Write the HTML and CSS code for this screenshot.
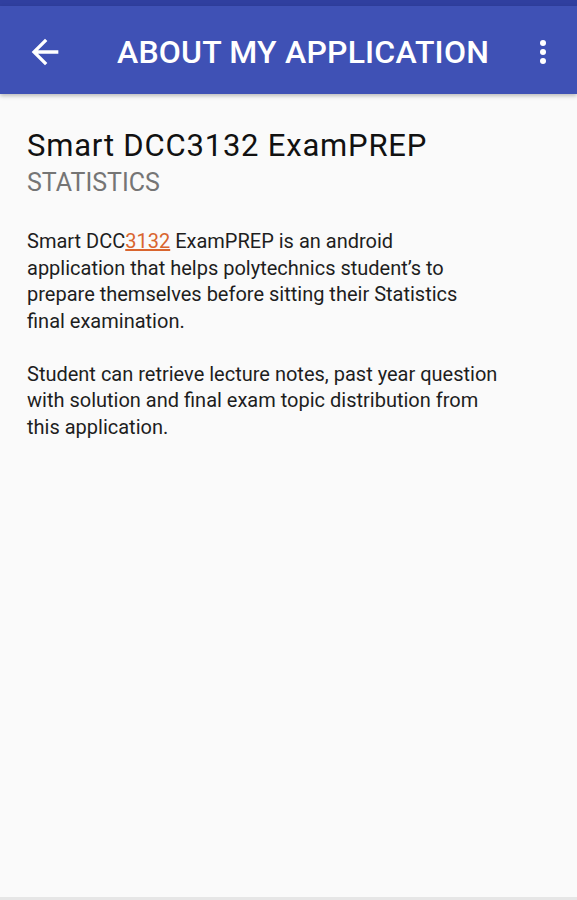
FILE: index.html
```html
<!DOCTYPE html>
<html>
<head>
    <title>About My Application</title>
    <meta name="viewport" content="width=device-width, initial-scale=1.0">
    <link rel="stylesheet" href="styles.css">
</head>
<body>
    <div class="status-bar"></div>
    <header class="toolbar">
        <button class="icon-btn back">
            <svg width="40" height="40" viewBox="0 0 24 24">
                <path d="M20 11H7.83l5.59-5.59L12 4l-8 8 8 8 1.41-1.41L7.83 13H20v-2z" fill="#fff"/>
            </svg>
        </button>
        <h1 class="toolbar-title">ABOUT MY APPLICATION</h1>
        <button class="icon-btn more">
            <svg width="36" height="36" viewBox="0 0 24 24">
                <circle cx="12" cy="6" r="2" fill="#fff"/>
                <circle cx="12" cy="12" r="2" fill="#fff"/>
                <circle cx="12" cy="18" r="2" fill="#fff"/>
            </svg>
        </button>
    </header>

    <main class="content">
        <h2 class="app-name">Smart DCC3132 ExamPREP</h2>
        <div class="subject">STATISTICS</div>

        <p class="desc">Smart DCC<a href="#">3132</a> ExamPREP is an android<br>application that helps polytechnics student’s to prepare themselves before sitting their Statistics final examination.</p>
        <p class="desc">Student can retrieve lecture notes, past year question with solution and final exam topic distribution from this application.</p>
    </main>
</body>
</html>
```

FILE: styles.css
```css
html, body {
    height: 100%;
}

body {
    margin: 0;
    background-color: #FAFAFA;
    font-family: Roboto, "Liberation Sans", sans-serif;
    display: flex;
    flex-direction: column;
    overflow: hidden;
}

.status-bar {
    height: 6px;
    background-color: #303F9F;
}

.toolbar {
    height: 88px;
    box-sizing: border-box;
    background-color: #3F51B5;
    display: flex;
    align-items: center;
    padding: 4px 16px 0 25px;
    box-shadow: 0 2px 4px rgba(0,0,0,0.25);
    position: relative;
    z-index: 1;
}

.icon-btn {
    background: none;
    border: none;
    padding: 0;
    display: flex;
    cursor: pointer;
}

.toolbar-title {
    flex: 1;
    margin: 0 0 0 52px;
    color: #fff;
    font-size: 32px;
    font-weight: 500;
    letter-spacing: 0.2px;
}

.content {
    flex: 1;
    padding: 34px 27px;
    border-bottom: 3px solid #E6E6E6;
}

.app-name {
    margin: 0 0 4px;
    font-size: 31px;
    font-weight: 400;
    letter-spacing: 0.8px;
    color: #111;
    line-height: 36px;
}

.subject {
    font-size: 25px;
    color: #757575;
    line-height: 30px;
    margin-bottom: 30px;
}

.desc {
    max-width: 471px;
    margin: 0 0 26.5px;
    font-size: 20px;
    line-height: 26.5px;
    color: #1E1E1E;
}

.desc a {
    color: #D9652E;
}
```
